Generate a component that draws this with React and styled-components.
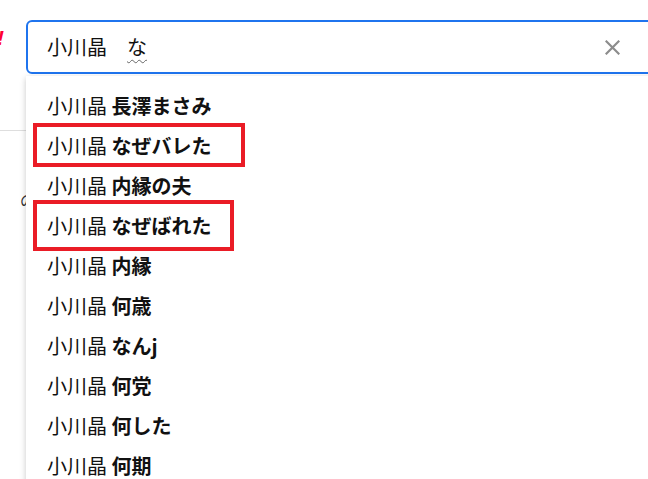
import React from 'react'
import styled, { createGlobalStyle } from 'styled-components'

const GlobalStyle = createGlobalStyle`
    html, body {
        margin: 0;
        padding: 0;
        background: #fff;
        overflow: hidden;
    }
    * {
        box-sizing: border-box;
    }
`;

const Page = styled.div`
    width: 100vw;
    height: 100vh;
    overflow: hidden;
    font-family: "Noto Sans CJK JP", "Noto Sans", sans-serif;
    color: #222;
`;

const Header = styled.header`
    height: 131px;
    display: flex;
    align-items: flex-start;
    padding-top: 20px;
    border-bottom: 1px solid #dedede;
`;

const Logo = styled.div`
    width: 29px;
    flex: none;
    margin-top: 7px;
    margin-left: -3px;
    color: #ff0033;
    font-family: "Liberation Sans", sans-serif;
    font-style: italic;
    font-weight: 700;
    font-size: 21px;
    line-height: 1;
`;

const SearchArea = styled.div`
    position: relative;
    flex: none;
    width: 660px;
`;

const SearchBox = styled.div`
    height: 54px;
    display: flex;
    align-items: center;
    justify-content: space-between;
    padding: 0 64px 0 19px;
    border: 2px solid #1f74ee;
    border-radius: 6px;
    background: #fff;
`;

const Query = styled.span`
    font-size: 20px;
    line-height: 1;
    color: #111;
    white-space: pre;
`;

const Composing = styled.span`
    text-decoration: underline wavy #666 1px;
    text-underline-offset: 4px;
`;

const ClearButton = styled.button`
    display: flex;
    align-items: center;
    justify-content: center;
    padding: 0;
    border: none;
    background: none;
    cursor: pointer;
`;

const Dropdown = styled.ul`
    position: absolute;
    top: 56px;
    left: 0;
    right: 0;
    margin: 0;
    padding: 9px 0 0;
    list-style: none;
    height: 480px;
    background: #fff;
    box-shadow: 0 2px 6px rgba(0, 0, 0, 0.22);
`;

const Item = styled.li`
    position: relative;
    height: 40px;
    display: flex;
    align-items: center;
    padding-left: 21px;
    font-size: 20px;
    color: #111;
    white-space: pre;
`;

const Suggest = styled.b`
    font-weight: 700;
`;

const Highlight = styled.span`
    position: absolute;
    top: ${p => p.$top}px;
    bottom: ${p => p.$bottom}px;
    left: 7px;
    width: ${p => p.$width}px;
    border: 4px solid #ea1c26;
`;

const Content = styled.div`
    padding: 58px 0 0 20px;
    font-size: 15px;
    color: #333;
`;

const suggestions = [
    { text: '長澤まさみ' },
    { text: 'なぜバレた', mark: { top: -2, bottom: -2, width: 212 } },
    { text: '内縁の夫' },
    { text: 'なぜばれた', mark: { top: -5, bottom: -6, width: 201 } },
    { text: '内縁' },
    { text: '何歳' },
    { text: 'なんj' },
    { text: '何党' },
    { text: '何した' },
    { text: '何期' },
];

function CloseIcon() {
    return (
        <svg width="15" height="15" viewBox="0 0 15 15">
            <path d="M1.5 1.5 L13.5 13.5 M13.5 1.5 L1.5 13.5" stroke="#8c8c8c" strokeWidth="2.2" strokeLinecap="square" />
        </svg>
    );
}

export default function App() {
    return (
        <Page>
            <GlobalStyle />
            <Header>
                <Logo>!</Logo>
                <SearchArea>
                    <SearchBox>
                        <Query>小川晶　<Composing>な</Composing></Query>
                        <ClearButton aria-label="クリア">
                            <CloseIcon />
                        </ClearButton>
                    </SearchBox>
                    <Dropdown>
                        {suggestions.map(s => (
                            <Item key={s.text}>
                                小川晶 <Suggest>{s.text}</Suggest>
                                {s.mark && <Highlight $top={s.mark.top} $bottom={s.mark.bottom} $width={s.mark.width} />}
                            </Item>
                        ))}
                    </Dropdown>
                </SearchArea>
            </Header>
            <Content>の</Content>
        </Page>
    );
}
